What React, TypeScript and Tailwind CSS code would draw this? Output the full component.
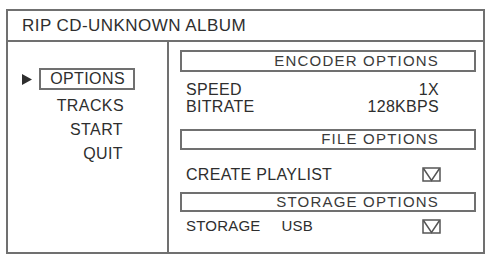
import React from "react";

const font = { fontFamily: '"Liberation Sans", Arial, sans-serif' };

function Check() {
  return (
    <svg width="19" height="15" viewBox="0 0 19 15" className="block">
      <rect x="1" y="1" width="17" height="13" fill="none" stroke="#555" strokeWidth="1.5" />
      <path d="M1.5 1.5 L9.5 13.5 L17.5 1.5" fill="none" stroke="#555" strokeWidth="1.5" />
    </svg>
  );
}

function Header({ children, h = "h-[22px]" }: { children: React.ReactNode; h?: string }) {
  return (
    <div
      className={`${h} ml-[11px] mr-[7px] border-2 border-[#707070] flex items-center justify-end pr-[35px] text-[15px] tracking-[1.2px] text-[#3a3a3a]`}
    >
      {children}
    </div>
  );
}

export default function App() {
  return (
    <div className="w-[487px] h-[254px] bg-white pl-[6px] pt-[9px]" style={font}>
      <div className="w-[479px] h-[245px] border-2 border-[#707070] flex flex-col text-[#2e2e2e]">
        <div className="h-[31px] border-b-2 border-[#707070] flex items-center pl-[14px] text-[17px] tracking-[0.45px] shrink-0">
          RIP CD-UNKNOWN ALBUM
        </div>
        <div className="flex flex-1">
          <div className="w-[161px] border-r-2 border-[#707070] shrink-0">
            <div className="w-[127px] flex flex-col items-end pt-[26px] text-[16px] tracking-[0.4px] leading-[24px]">
              <div className="flex items-center h-[22px]">
                <svg width="10" height="11" viewBox="0 0 10 11" className="mr-[7px]">
                  <path d="M0 0 L10 5.5 L0 11 Z" fill="#2e2e2e" />
                </svg>
                <div className="w-[96px] h-[22px] border-2 border-[#707070] flex items-center justify-end pr-[8px]">
                  OPTIONS
                </div>
              </div>
              <div className="mt-[4px] pr-[11px]">TRACKS</div>
              <div className="pr-[12px]">START</div>
              <div className="pr-[12px]">QUIT</div>
            </div>
          </div>
          <div className="flex-1 pt-[8px]">
            <Header>ENCODER OPTIONS</Header>
            <div className="ml-[17px] mr-[44px] mt-[9px] text-[16px] tracking-[0.3px] leading-[17px]">
              <div className="flex justify-between">
                <span>SPEED</span>
                <span>1X</span>
              </div>
              <div className="flex justify-between">
                <span>BITRATE</span>
                <span>128KBPS</span>
              </div>
            </div>
            <div className="mt-[14px]">
              <Header h="h-[21px]">FILE OPTIONS</Header>
            </div>
            <div className="ml-[17px] mr-[42px] mt-[16px] h-[17px] flex items-center justify-between text-[16px] tracking-[0.3px]">
              <span>CREATE PLAYLIST</span>
              <Check />
            </div>
            <div className="mt-[9px]">
              <Header h="h-[20px]">STORAGE OPTIONS</Header>
            </div>
            <div className="ml-[17px] mr-[42px] mt-[6px] h-[17px] flex items-center text-[15px] tracking-[0.2px]">
              <span>STORAGE</span>
              <span className="ml-[21px]">USB</span>
              <span className="ml-auto">
                <Check />
              </span>
            </div>
          </div>
        </div>
      </div>
    </div>
  );
}
